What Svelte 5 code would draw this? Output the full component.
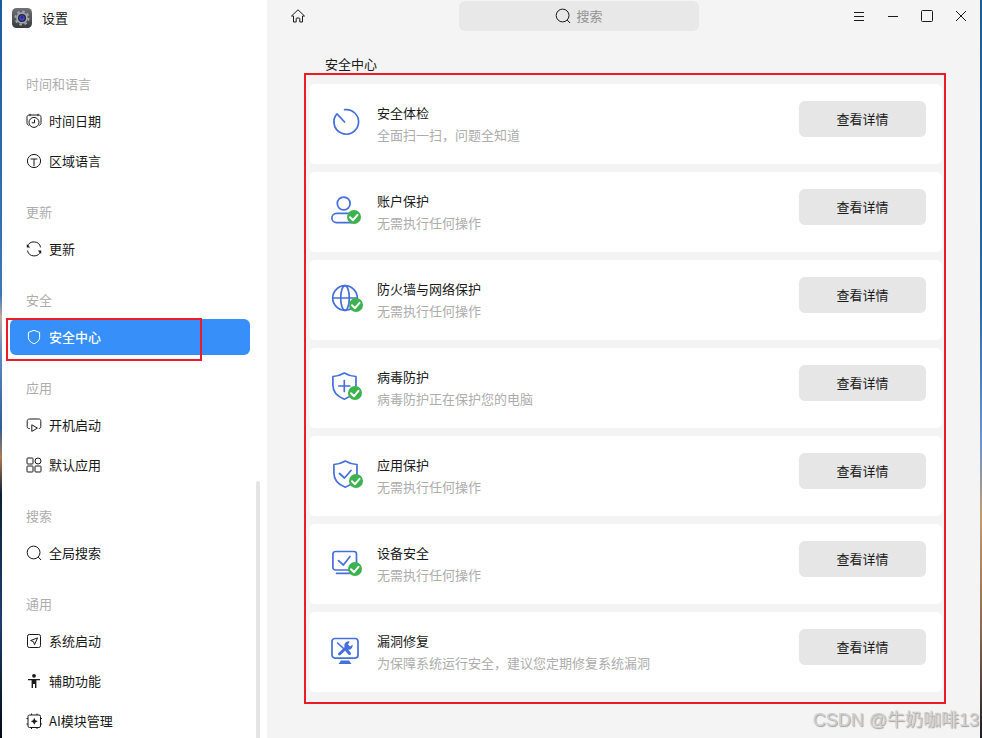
<script lang="ts">
	type Item = { icon: string; label: string };
	type Group = { title: string; items: Item[] };

	const groups: Group[] = [
		{
			title: '时间和语言',
			items: [
				{ icon: 'clock', label: '时间日期' },
				{ icon: 'region', label: '区域语言' }
			]
		},
		{ title: '更新', items: [{ icon: 'refresh', label: '更新' }] },
		{ title: '安全', items: [{ icon: 'shield', label: '安全中心' }] },
		{
			title: '应用',
			items: [
				{ icon: 'boot', label: '开机启动' },
				{ icon: 'apps', label: '默认应用' }
			]
		},
		{ title: '搜索', items: [{ icon: 'search', label: '全局搜索' }] },
		{
			title: '通用',
			items: [
				{ icon: 'start', label: '系统启动' },
				{ icon: 'person', label: '辅助功能' },
				{ icon: 'ai', label: 'AI模块管理' }
			]
		}
	];

	const cards = [
		{ icon: 'scan', title: '安全体检', text: '全面扫一扫，问题全知道' },
		{ icon: 'account', title: '账户保护', text: '无需执行任何操作', badge: 25 },
		{ icon: 'globe', title: '防火墙与网络保护', text: '无需执行任何操作', badge: 27 },
		{ icon: 'virus', title: '病毒防护', text: '病毒防护正在保护您的电脑', badge: 26 },
		{ icon: 'app', title: '应用保护', text: '无需执行任何操作', badge: 27 },
		{ icon: 'device', title: '设备安全', text: '无需执行任何操作', badge: 26 },
		{ icon: 'repair', title: '漏洞修复', text: '为保障系统运行安全，建议您定期修复系统漏洞' }
	];

	let active = $state('安全中心');
</script>

{#snippet navIcon(name: string)}
	<svg class="nav-icon" viewBox="0 0 16 16" aria-hidden="true">
		{#if name === 'clock'}
			<path d="M2.8 12.4C1.6 12 1 11.2 1 9.6V4.4C1 2.8 1.8 2 3.4 2h9.2C14.2 2 15 2.8 15 4.4v5.2c0 1.6-.6 2.4-1.8 2.800M4 .8v2.4M12 .8v2.4" />
			<circle cx="8" cy="9.4" r="5" />
			<path d="M8.5 6.6v3.2H5.8" />
		{:else if name === 'region'}
			<circle cx="8" cy="8" r="6.6" />
			<path d="M4.6 6h6.8M8 6v7.2" />
		{:else if name === 'refresh'}
			<path d="M1.4 5.8A6.8 6.8 0 0 1 14.6 6.4M14.6 10.2A6.8 6.8 0 0 1 1.5 9.6" />
			<path class="solid" d="M.8 3v3.400h3.400zM15.200 13V9.600h-3.400z" />
		{:else if name === 'shield'}
			<path d="M8 1.300 13.600 3.400v5c0 3-2.200 5-5.600 6.400C4.600 13.400 2.400 11.400 2.400 8.400v-5z" />
		{:else if name === 'boot'}
			<path d="M4 11.500h-.6c-1.600 0-2.200-.7-2.200-2.100v-5C1.200 2.800 1.900 2 3.500 2h9c1.600 0 2.300.8 2.300 2.400v5c0 1.400-.6 2.100-2 2.100" />
			<path d="M5.800 7.800v6.600l5.600-3.300z" />
		{:else if name === 'apps'}
			<rect x="1" y="1" width="6" height="6" rx=".8" />
			<circle cx="12" cy="4" r="3" />
			<rect x="1" y="9" width="6" height="6" rx=".8" />
			<rect x="9" y="9" width="6" height="6" rx=".8" />
		{:else if name === 'search'}
			<circle cx="7.6" cy="7.5" r="6.4" />
			<path d="m12.2 12 2.800 3" />
		{:else if name === 'start'}
			<rect x="1.5" y="1.5" width="13" height="13" rx="1.8" />
			<path d="M11.600 4.900 4.600 7.500l2.900 1.200 1 3z" />
		{:else if name === 'person'}
			<circle class="solid" cx="8" cy="2.800" r="1.900" />
			<path class="solid" d="M2 6h12v1.200h-3.600V15H9v-4H7v4H5.600V7.200H2z" />
		{:else if name === 'ai'}
			<rect x="2" y="2" width="12.5" height="12.5" rx="1.5" />
			<path d="M5.500.5V2M11 .5V2M5.500 14.500V16M11 14.500V16M.5 5.500H2M.5 11H2M14.500 5.500H16M14.500 11H16" />
			<path class="solid" d="m8.300 4.800 1.100 2.400 2.400 1.100-2.400 1.100-1.100 2.400-1.100-2.400-2.400-1.100 2.400-1.100z" />
		{/if}
	</svg>
{/snippet}

{#snippet cardIcon(name: string, badge?: number)}
	<svg class="card-icon" viewBox="0 0 36 36" aria-hidden="true">
		{#if name === 'scan'}
			<path d="M15.600 3.700A12.300 12.300 0 1 1 8 7.800L15.600 16" />
		{:else if name === 'account'}
			<circle cx="14.700" cy="9.500" r="6.400" />
			<rect x="2.900" y="19.400" width="24" height="9.200" rx="4.600" />
		{:else if name === 'globe'}
			<circle cx="16" cy="16" r="12.300" />
			<ellipse cx="16" cy="16" rx="4.300" ry="12.300" />
			<path d="M3.700 16h24.600" />
		{:else if name === 'virus'}
			<path d="M15.300 3Q20.500 6.200 27 6.500V15c0 7.200-4.200 11.400-11.700 14.200C7.800 26.400 3.900 22.200 3.900 15V6.500Q10 6.200 15.300 3Z" />
			<path d="M9.800 16h11M15.300 10.500v11" />
		{:else if name === 'app'}
			<path d="M16.300 3Q21.500 6.200 28 6.500V15c0 7.200-4.200 11.400-11.700 14.200C8.800 26.400 4.900 22.200 4.900 15V6.500Q11 6.200 16.300 3Z" />
			<path d="m10.500 15.500 5 4.500 6.500-7.500" />
		{:else if name === 'device'}
			<rect x="3.900" y="5.500" width="23.600" height="18.500" rx="2.500" />
			<path d="m9.500 14.600 4.900 4.400L21 10.500M7.500 27.300H21" />
		{:else if name === 'repair'}
			<rect x="3" y="4.500" width="26" height="19.600" rx="3" />
			<path class="fill" d="M12 26.500h8l2.500 3.500h-13z" />
			<path class="thick" d="m17.500 16 3 3.500M10.500 20l8-7.500" />
			<path d="m8.600 9 6.500 6" />
			<path class="fill" d="M20.800 7.600a4.200 4.200 0 1 0 2.800 3.200l-2.600 1.700-2-1.900z" />
		{/if}
		{#if badge}
			<circle class="badge" cx={badge} cy="23" r="7" />
			<path class="tick" d="m{badge - 4} 23.200 3 3 4.500-5.400" />
		{/if}
	</svg>
{/snippet}

<div class="desktop">
	<div class="window">
		<aside class="sidebar">
			<div class="app-title">
				<svg class="logo" viewBox="0 0 20 20" aria-hidden="true">
					<defs>
						<linearGradient id="logo-bg" x1="0" y1="0" x2="0" y2="1">
							<stop offset="0" stop-color="#707276" />
							<stop offset="1" stop-color="#363a3f" />
						</linearGradient>
					</defs>
					<rect width="20" height="20" rx="4.5" fill="url(#logo-bg)" />
					<circle cx="10" cy="10" r="6.6" fill="none" stroke="#a5a8ab" stroke-width="1.8" stroke-dasharray="2.6 2.58" />
					<circle cx="10" cy="10" r="5.8" fill="#a5a8ab" />
					<circle cx="10" cy="10" r="4" fill="#20243c" />
					<circle cx="10" cy="10" r="2.7" fill="#5140dc" />
					<circle cx="10" cy="9.5" r="1.4" fill="#123b69" />
				</svg>
				<span>设置</span>
			</div>

			<nav>
				{#each groups as group}
					<section class="group">
						<h2>{group.title}</h2>
						<div class="group-items">
							{#each group.items as item}
								<button
									class="nav-item"
									class:active={active === item.label}
									onclick={() => (active = item.label)}
								>
									{@render navIcon(item.icon)}
									<span class="nav-label">{item.label}</span>
									{#if item.icon === 'shield'}
										<span class="marker"></span>
									{/if}
								</button>
							{/each}
						</div>
					</section>
				{/each}
			</nav>
		</aside>
		<div class="scrollbar"></div>

		<main>
			<header class="topbar">
				<button class="tool home" aria-label="主页">
					<svg viewBox="0 0 16 16">
						<path d="M3.500 8v6h2.700v-3.200c0-.5.300-.8.800-.8h2c.5 0 .8.300.8.800V14h2.700V8h2L8 1.800 1.500 8z" />
					</svg>
				</button>
				<label class="search">
					{@render navIcon('search')}
					<input type="text" placeholder="搜索" aria-label="搜索" />
				</label>
				<div class="controls">
					<button class="tool" aria-label="菜单">
						<svg viewBox="0 0 16 16"><path d="M3 4.500h10M3 8.500h10M3 12.500h10" /></svg>
					</button>
					<button class="tool" aria-label="最小化">
						<svg viewBox="0 0 16 16"><path d="M3 8.500h10" /></svg>
					</button>
					<button class="tool" aria-label="最大化">
						<svg viewBox="0 0 16 16"><rect x="2.5" y="2.5" width="11" height="11" rx="1" /></svg>
					</button>
					<button class="tool" aria-label="关闭">
						<svg viewBox="0 0 16 16"><path d="m3 3 10 10M13 3 3 13" /></svg>
					</button>
				</div>
			</header>

			<h1>安全中心</h1>

			<div class="panel">
				{#each cards as card}
					<article class="card">
						{@render cardIcon(card.icon, card.badge)}
						<div class="card-text">
							<h3>{card.title}</h3>
							<p>{card.text}</p>
						</div>
						<button class="details">查看详情</button>
					</article>
				{/each}
			</div>
		</main>
	</div>
	<div class="watermark">CSDN @牛奶咖啡13</div>
</div>

<style>
	:global(body) {
		margin: 0;
	}

	.desktop {
		position: relative;
		display: flex;
		min-height: 100vh;
		padding: 0 2px;
		box-sizing: border-box;
		font-family: 'Noto Sans CJK SC', sans-serif;
		font-size: 13px;
		color: #1a1a1a;
		background:
			linear-gradient(#205a94, #2c64a4 40%, #6b95c8 60%, #c09a70 70%, #8c6a50 85%, #1c1c28) right / 2px 100% no-repeat,
			linear-gradient(#1f5a9a, #3f77b5 40%, #c0aaa0 43%, #5a8ac0 48%, #2f5f95 58%, #b07a50 62%, #0a2038 67%, #1c3f70 84%, #020a14) left / 2px 100% no-repeat;
	}

	.window {
		position: relative;
		display: flex;
		flex: 1;
		min-width: 0;
		background: #f4f4f4;
	}

	button,
	input {
		font: inherit;
		color: inherit;
		border: 0;
		padding: 0;
		background: none;
	}

	h1,
	h2,
	h3,
	p {
		margin: 0;
		font-size: 13px;
		font-weight: 400;
	}

	svg {
		display: block;
		flex: none;
		fill: none;
		stroke: currentColor;
	}

	.solid {
		fill: currentColor;
		stroke: none;
	}

	.sidebar {
		flex: none;
		width: 265px;
		height: 100vh;
		overflow-y: auto;
		scrollbar-width: none;
		box-sizing: border-box;
		padding: 8px 17px 0 8px;
		background: #fff;
	}

	.app-title {
		display: flex;
		align-items: center;
		gap: 10px;
		height: 20px;
		margin: 0 2px 46px;
	}

	.app-title span,
	.nav-label {
		padding-bottom: 2px;
	}

	.logo {
		width: 20px;
		height: 20px;
		stroke: none;
	}

	.group + .group {
		margin-top: 23px;
	}

	.group h2 {
		margin: 0 16px 9px;
		line-height: 20px;
		color: #adadad;
	}

	.group-items {
		display: flex;
		flex-direction: column;
		gap: 4px;
	}

	.nav-item {
		position: relative;
		display: flex;
		align-items: center;
		gap: 7px;
		height: 36px;
		padding: 0 16px;
		border-radius: 6px;
	}

	.nav-item.active {
		background: #3790fa;
		color: #fff;
		font-weight: 500;
	}

	.nav-icon {
		width: 16px;
		height: 16px;
	}

	/* red highlight frame around the security entry */
	.marker {
		position: absolute;
		top: -1px;
		right: 48px;
		bottom: -6px;
		left: -4px;
		border: 2px solid #ed1c24;
	}

	.scrollbar {
		position: absolute;
		top: 481px;
		bottom: 0;
		left: 254px;
		width: 4px;
		border-radius: 2px 2px 0 0;
		background: #e5e5e5;
	}

	main {
		flex: 1;
		min-width: 0;
	}

	.topbar {
		display: flex;
		align-items: center;
		height: 32px;
		padding: 0 2px 0 14px;
	}

	.tool {
		display: flex;
		align-items: center;
		justify-content: center;
		width: 34px;
		height: 32px;
	}

	.tool svg {
		width: 16px;
		height: 16px;
	}

	.search {
		display: flex;
		align-items: center;
		justify-content: center;
		gap: 5px;
		width: 240px;
		height: 30px;
		margin-left: 144px;
		border-radius: 6px;
		background: #e8e8e8;
	}

	.search input {
		field-sizing: content;
		max-width: 180px;
		padding-bottom: 2px;
		outline: none;
	}

	.search input::placeholder {
		color: #929292;
		opacity: 1;
	}

	.controls {
		display: flex;
		margin-left: auto;
	}

	h1 {
		margin: 24px 58px 1px;
		line-height: 16px;
	}

	.panel {
		display: flex;
		flex-direction: column;
		gap: 8px;
		margin: 0 34px 0 37px;
		padding: 9px 2px 10px 3px;
		border: 2px solid #ed1c24;
	}

	.card {
		display: flex;
		align-items: center;
		height: 80px;
		padding: 0 16px 0 20px;
		border-radius: 6px;
		background: #fff;
	}

	.card-icon {
		width: 36px;
		height: 36px;
		margin-right: 12px;
		stroke: #456fdc;
		stroke-width: 1.7;
		stroke-linecap: round;
		stroke-linejoin: round;
	}

	.fill {
		fill: #456fdc;
		stroke: none;
	}

	.thick {
		stroke-width: 3;
	}

	.badge {
		fill: #3db34f;
		stroke: none;
	}

	.tick {
		stroke: #fff;
		stroke-width: 2;
	}

	.card-text {
		flex: 1;
		line-height: 22px;
	}

	.card-text p {
		color: #adadad;
	}

	.details {
		align-self: flex-start;
		width: 127px;
		height: 36px;
		margin-top: 17px;
		padding-bottom: 2px;
		border-radius: 6px;
		background: #e6e6e6;
	}

	.watermark {
		position: absolute;
		right: 3px;
		bottom: 5px;
		font-family: 'Liberation Sans', 'Noto Sans CJK SC', sans-serif;
		font-size: 18px;
		line-height: 26px;
		color: #cfcfcf;
		text-shadow: 1px 1px 1px #a0a0a0;
	}
</style>
